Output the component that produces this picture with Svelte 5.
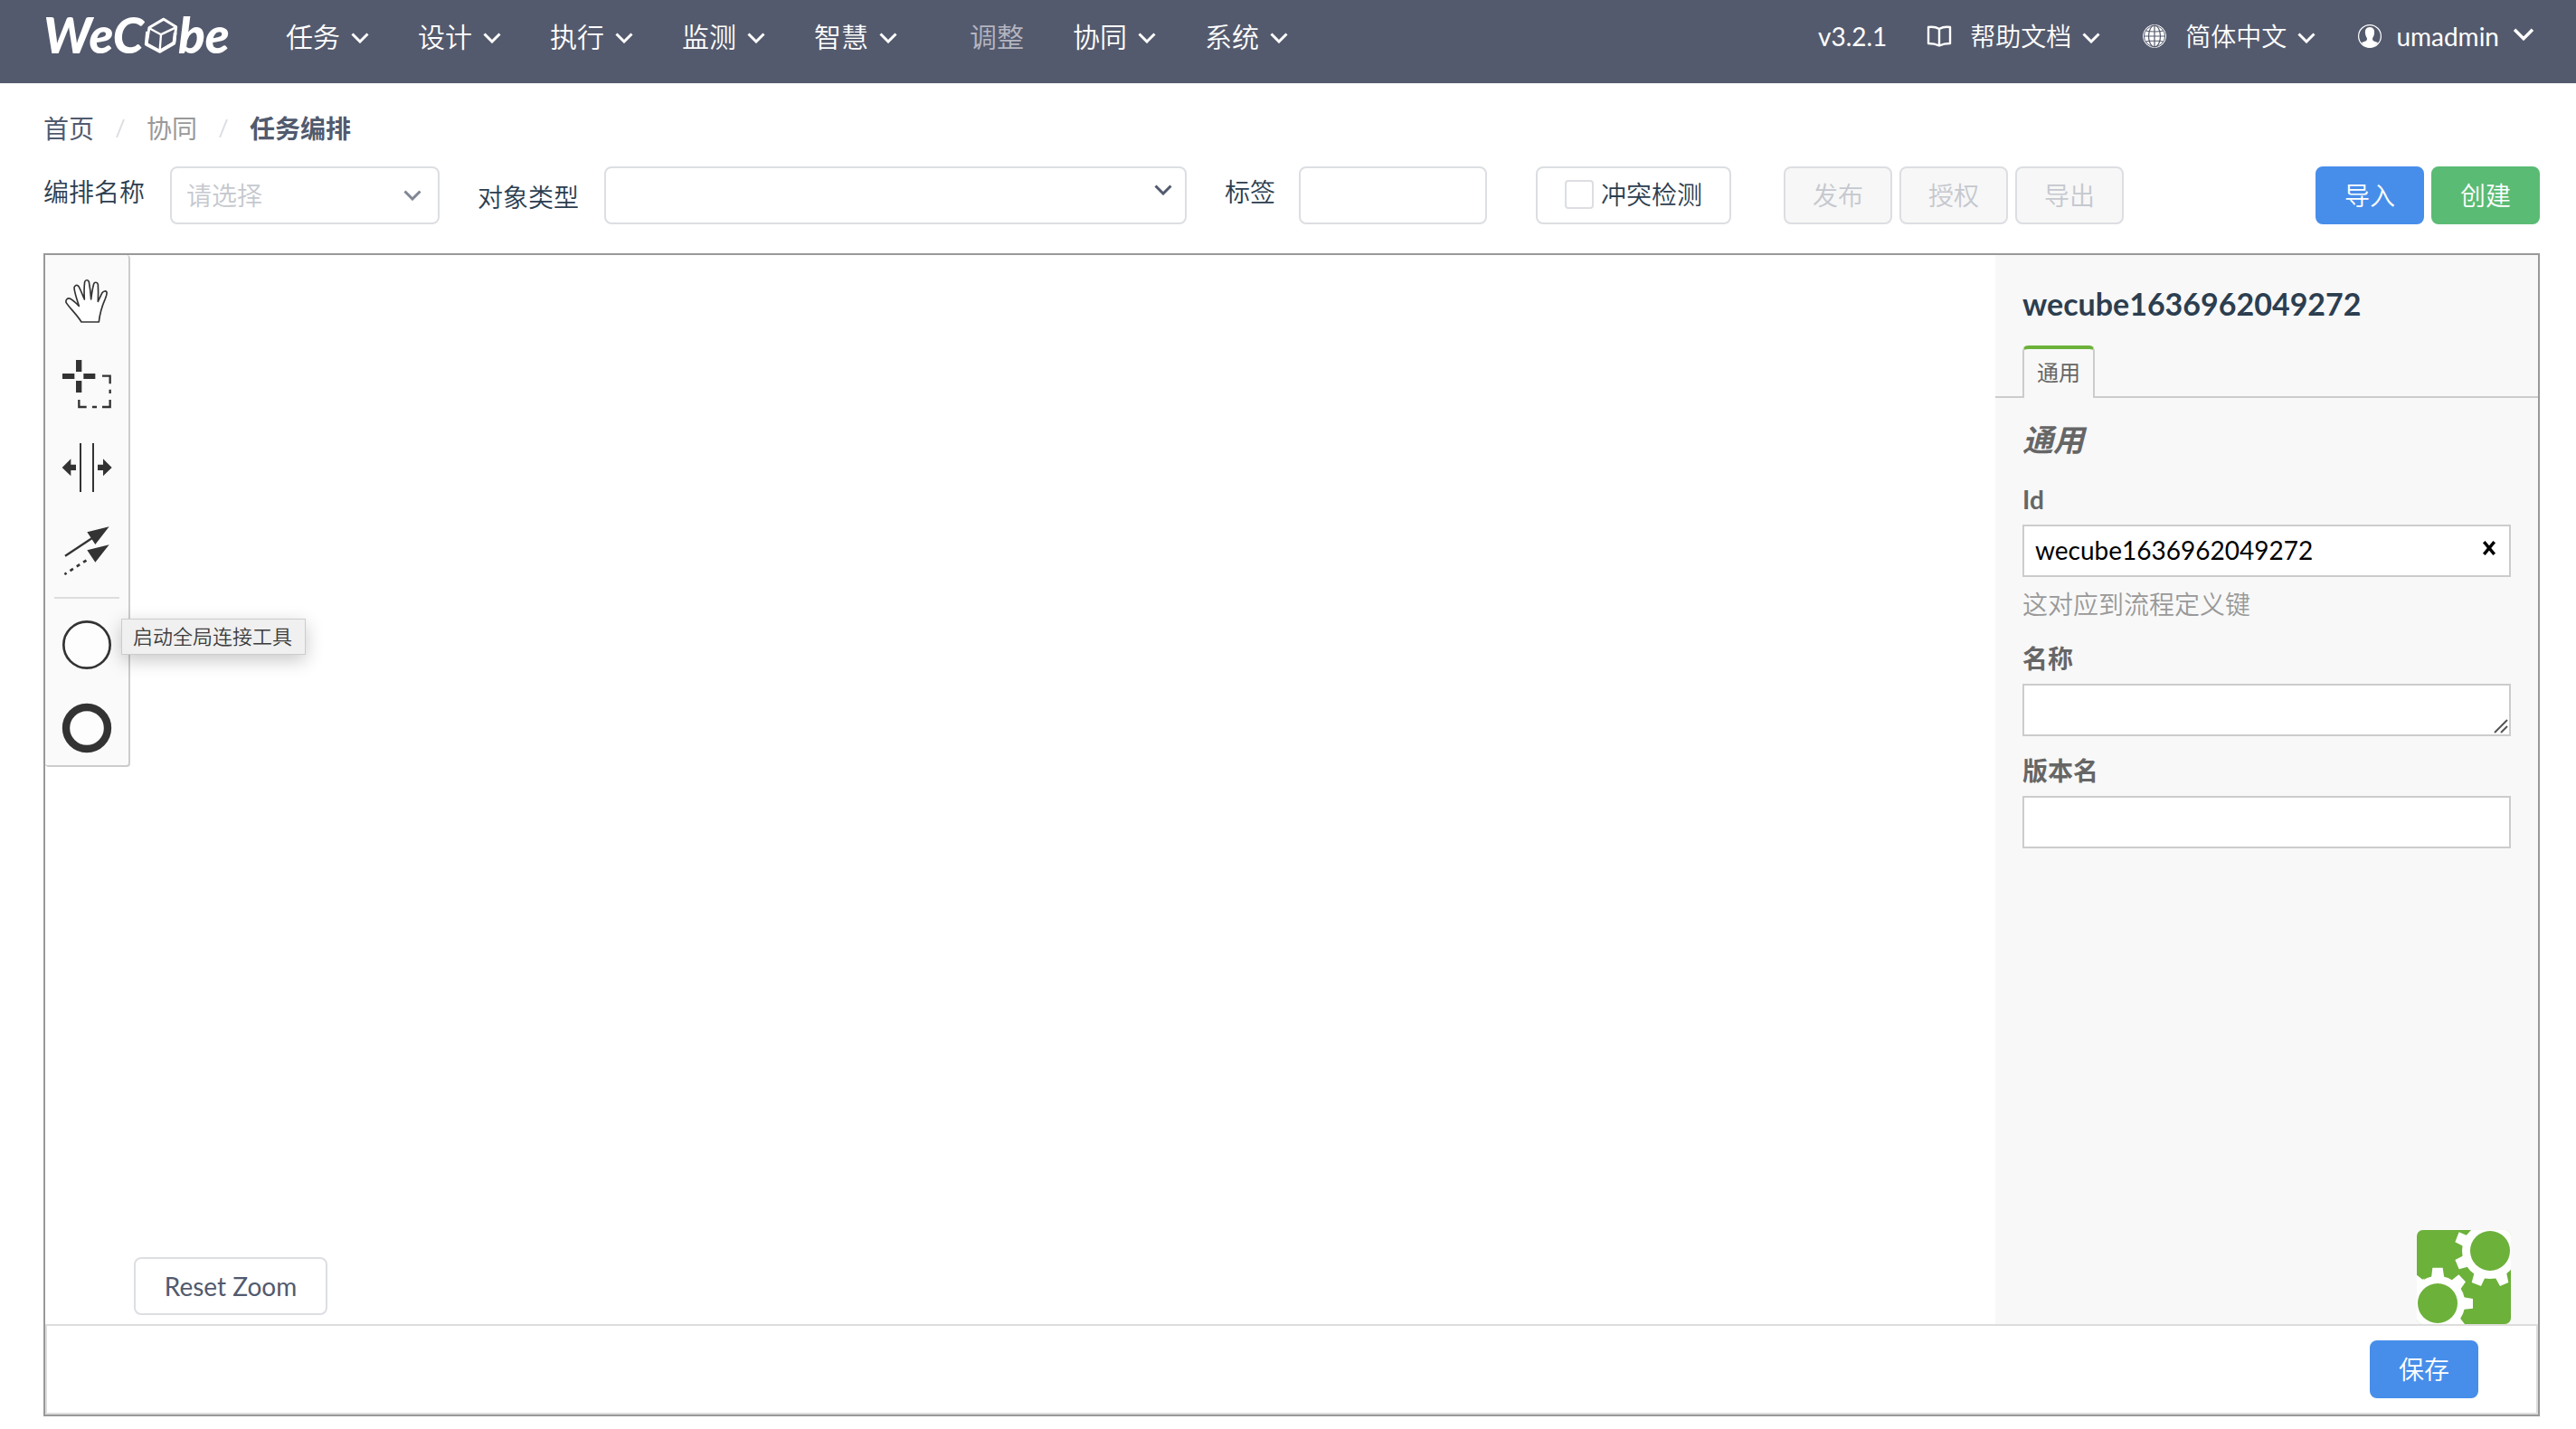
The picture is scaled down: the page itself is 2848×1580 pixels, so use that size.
<script>
  const menus = [
    { label: '任务' },
    { label: '设计' },
    { label: '执行' },
    { label: '监测' },
    { label: '智慧' },
    { label: '调整', disabled: true },
    { label: '协同' },
    { label: '系统' }
  ];
  const actions = ['发布', '授权', '导出'];
  let processId = $state('wecube1636962049272');
  let name = $state('');
  let version = $state('');
  let tag = $state('');
  let conflict = $state(false);
</script>

{#snippet chevron(size)}
  <svg class="chevron {size}" viewBox="0 0 20 12" aria-hidden="true"><path d="M1.500 1.500 10 10 18.500 1.500" /></svg>
{/snippet}

<div class="page">
  <header class="topbar">
    <a class="logo" href="#home" aria-label="WeCube">
      <span>WeC</span>
      <svg class="cube" viewBox="344 38 114 122" aria-hidden="true">
        <path d="M410 47 451 73 445 124 397 153 353 129 362 75Z" stroke-width="9" />
        <path d="M364 78 401 98 447 76M401 98 397 150" stroke-width="7" />
        <path d="M356 88 352 130 397 154 444 127 448 92" stroke-width="11" />
      </svg>
      <span>be</span>
    </a>
    <nav class="menu">
      {#each menus as item}
        <button class="menu-item" class:disabled={item.disabled} disabled={item.disabled}>
          {item.label}
          {#if !item.disabled}{@render chevron('small')}{/if}
        </button>
      {/each}
    </nav>
    <div class="tools">
      <span class="release">v3.2.1</span>
      <button class="tool docs">
        <svg class="tool-icon" viewBox="0 0 28 28" aria-hidden="true">
          <path d="M2 4Q9 3 14 6Q19 3 26 4V22Q19 22 14 24.500Q9 22 2 22ZM14 6V24" fill="none" stroke="currentColor" stroke-width="2.400" stroke-linejoin="round" />
        </svg>
        帮助文档 {@render chevron('small')}
      </button>
      <button class="tool lang">
        <svg class="tool-icon" viewBox="0 0 28 28" aria-hidden="true">
          <circle cx="14" cy="14" r="12.500" fill="#fff" stroke="#fff" />
          <g fill="none" stroke="#545a6d" stroke-width="1.200">
            <circle cx="14" cy="14" r="11.600" stroke-width="1" />
            <ellipse cx="14" cy="14" rx="6.500" ry="12" />
            <path d="M14 2V26M2 14H26M4 8Q14 10 24 8M4 20Q14 18 24 20" />
          </g>
        </svg>
        简体中文 {@render chevron('small')}
      </button>
      <button class="tool user">
        <svg class="tool-icon" viewBox="0 0 28 28" aria-hidden="true">
          <circle cx="14" cy="14" r="12.400" fill="none" stroke="#fff" stroke-width="1.200" />
          <path d="M14 4C18 4 19.500 7 19 11C18.700 14 17.500 15 17 16.500C17 19 18 19.500 23 21C20.500 25 17 26.500 14 26.500C11 26.500 7.500 25 5 21C10 19.500 11 19 11 16.500C10.500 15 9.300 14 9 11C8.500 7 10 4 14 4Z" fill="#fff" />
        </svg>
        umadmin {@render chevron('large')}
      </button>
    </div>
  </header>

  <nav class="crumbs" aria-label="breadcrumb">
    <a href="#home">首页</a>
    <svg class="slash" viewBox="0 0 10 20" aria-hidden="true"><path d="M9 0 1 20" /></svg>
    <span class="muted">协同</span>
    <svg class="slash" viewBox="0 0 10 20" aria-hidden="true"><path d="M9 0 1 20" /></svg>
    <strong>任务编排</strong>
  </nav>

  <div class="filters">
    <label class="upper" for="flow">编排名称</label>
    <div class="select flow">
      <select id="flow"><option>请选择</option></select>
      {@render chevron('field')}
    </div>
    <label class="lower" for="entity">对象类型</label>
    <div class="select entity">
      <select id="entity"><option></option></select>
      {@render chevron('field')}
    </div>
    <label class="upper" for="tag">标签</label>
    <input id="tag" class="tag" type="text" bind:value={tag} />
    <label class="check"><input type="checkbox" bind:checked={conflict} />冲突检测</label>
    <div class="group">
      {#each actions as action}<button class="btn" disabled>{action}</button>{/each}
    </div>
    <div class="group end">
      <button class="btn primary">导入</button>
      <button class="btn success">创建</button>
    </div>
  </div>

  <main class="designer">
    <div class="board">
      <section class="workspace">
        <div class="palette">
          <button class="entry" aria-label="抓手工具">
            <svg viewBox="75 65 246 246">
              <path d="M180 257H238C241 228 252 196 259 180C263 170 265 163 264 158C261 153 253 154 249 160L235 189C236 170 236 146 235 132C233 124 223 124 221 131C217 145 214 165 212 182C211 165 208 140 205 124C202 116 193 117 191 124C189 140 189 165 190 182C184 168 177 150 171 139C166 132 157 136 156 143C157 160 166 185 172 204C161 193 151 183 141 179C133 178 127 184 129 192C140 210 163 230 180 257Z" fill="#fff" stroke="#333" stroke-width="5" stroke-linejoin="round" />
            </svg>
          </button>
          <button class="entry" aria-label="套索工具">
            <svg viewBox="75 342 246 246">
              <path d="M162 384H181V423H162ZM162 453H181V492H162ZM117 429H157V447H117ZM187 429H226V447H187Z" fill="#333" />
              <path d="M249 437H275V463M275 482V495M275 516V540H249M231 540H216M197 540H172V516" fill="none" stroke="#333" stroke-width="7" />
            </svg>
          </button>
          <button class="entry" aria-label="空间工具">
            <svg viewBox="75 618 246 246">
              <path d="M177 660V822M219 660V822" stroke="#333" stroke-width="6" />
              <path d="M116 741 145 712V731H162V750H145V769ZM281 741 252 712V731H234V750H252V769Z" fill="#333" />
            </svg>
          </button>
          <button class="entry" aria-label="全局连接工具">
            <svg viewBox="75 24 246 246">
              <path d="M126 164 220 102" stroke="#333" stroke-width="7" />
              <path d="M124 225 205 173" stroke="#333" stroke-width="8" stroke-dasharray="12 14" stroke-dashoffset="4" />
              <path d="M199 85 272 67 226 126ZM199 145 272 127 226 185Z" fill="#333" />
            </svg>
          </button>
          <hr />
          <button class="entry" aria-label="开始事件">
            <svg viewBox="75 336 246 246"><circle cx="198" cy="459" r="77" fill="#fff" fill-opacity="0.500" stroke="#333" stroke-width="8" /></svg>
          </button>
          <button class="entry" aria-label="结束事件">
            <svg viewBox="75 612 246 246"><circle cx="198" cy="735" r="69" fill="#fff" fill-opacity="0.500" stroke="#333" stroke-width="25" /></svg>
          </button>
          <div class="tooltip" role="tooltip">启动全局连接工具</div>
        </div>
        <button class="btn reset">Reset Zoom</button>
      </section>

      <aside class="panel">
        <h2>{processId}</h2>
        <div class="tabs"><button class="tab">通用</button></div>
        <div class="props">
          <h3>通用</h3>
          <div class="field">
            <label for="pid">Id</label>
            <div class="control">
              <input id="pid" type="text" bind:value={processId} />
              <button class="clear" aria-label="清除"><svg viewBox="0 0 14 14"><path d="M2 1 12 13M12 1 2 13" /></svg></button>
            </div>
            <p>这对应到流程定义键</p>
          </div>
          <div class="field">
            <label for="pname">名称</label>
            <div class="control">
              <textarea id="pname" rows="1" bind:value={name}></textarea>
              <svg class="grip" viewBox="0 0 16 16" aria-hidden="true"><path d="M1 15 15 1M8 15 15 8" /></svg>
            </div>
          </div>
          <div class="field">
            <label for="pver">版本名</label>
            <input id="pver" type="text" bind:value={version} />
          </div>
        </div>
        <svg class="badge" viewBox="336 90 312 312" aria-hidden="true">
          <defs><clipPath id="badge-clip"><rect x="336" y="90" width="312" height="312" rx="20" /></clipPath></defs>
          <g clip-path="url(#badge-clip)">
            <rect x="336" y="90" width="312" height="312" fill="#6cb13a" />
            <g fill="#fff">
              <path d="M579 90H648V160H579Z" />
              <circle cx="579" cy="159" r="93" />
              <path d="M530 80 500 107 476 97 463 130 495 146ZM494 173 463 189 476 220 510 211ZM530 220 518 264 549 276 566 240ZM592 240 612 276 640 264 630 215Z" />
              <path d="M336 402H405V333H336Z" />
              <circle cx="405" cy="333" r="91" />
              <path d="M384 250 388 215H422L427 250ZM446 261 475 238 498 262 476 293ZM486 312 522 318V350L486 354ZM484 374 479 382 495 402H440ZM362 250 355 254 336 239V290Z" />
            </g>
            <circle cx="579" cy="159" r="66" fill="#6cb13a" />
            <circle cx="405" cy="333" r="66" fill="#6cb13a" />
          </g>
        </svg>
      </aside>
    </div>
    <footer class="savebar"><button class="btn primary">保存</button></footer>
  </main>
</div>

<style>
  :global(body) {
    background: #fff;
  }
  .page,
  .page :global(*) {
    box-sizing: border-box;
  }
  .page {
    display: flex;
    flex-direction: column;
    min-height: 100vh;
    padding-bottom: 14px;
    font-family: Lato, 'Noto Sans CJK SC', sans-serif;
    font-size: 28px;
    line-height: 40px;
    color: #2c3e50;
  }
  button,
  input,
  select,
  textarea {
    font: inherit;
    color: inherit;
  }
  button {
    padding: 0;
    border: 0;
    background: none;
    cursor: pointer;
  }

  .chevron {
    flex: none;
    fill: none;
    stroke: currentColor;
    stroke-width: 3;
  }
  .small {
    width: 20px;
    height: 12px;
    margin-top: 4px;
  }
  .large {
    width: 24px;
    height: 14px;
    margin-bottom: 4px;
  }

  .topbar {
    display: flex;
    align-items: center;
    height: 92px;
    padding: 0 46px 12px 48px;
    background: #545a6d;
    color: #fff;
  }
  .logo {
    display: flex;
    align-items: center;
    width: 204px;
    margin-right: 64px;
    padding-bottom: 4px;
    color: #fff;
    font-size: 55px;
    line-height: 60px;
    font-weight: 900;
    font-style: italic;
    text-decoration: none;
  }
  .cube {
    flex: none;
    width: 38px;
    height: 41px;
    fill: none;
    stroke: #fff;
    stroke-linejoin: round;
  }
  .menu {
    display: flex;
    gap: 54px;
    font-size: 30px;
    font-weight: 350;
  }
  .menu-item {
    display: flex;
    align-items: center;
    gap: 12px;
    white-space: nowrap;
  }
  .menu-item.disabled {
    margin-left: 26px;
    color: #b4b6c2;
  }
  .tools {
    display: flex;
    align-items: center;
    margin-left: auto;
  }
  .release {
    margin-right: 44px;
  }
  .tool {
    display: flex;
    align-items: center;
    gap: 12px;
    white-space: nowrap;
  }
  .tool-icon {
    width: 28px;
    height: 28px;
    flex: none;
    margin-right: 8px;
  }
  .docs,
  .lang {
    margin-right: 46px;
    font-weight: 350;
  }
  .user {
    gap: 15px;
  }
  .user .tool-icon {
    margin-right: 0;
  }

  .crumbs {
    display: flex;
    align-items: center;
    gap: 24px;
    padding: 30px 48px 22px;
    color: #515a6e;
  }
  .crumbs a {
    color: inherit;
    text-decoration: none;
  }
  .crumbs .muted {
    color: #999;
  }
  .slash {
    width: 10px;
    height: 20px;
    stroke: #dcdee2;
    stroke-width: 2;
  }

  .filters {
    display: flex;
    align-items: center;
    padding: 0 40px 32px 48px;
    font-weight: 350;
    white-space: nowrap;
  }
  .upper {
    padding-bottom: 8px;
  }
  .lower {
    padding-top: 4px;
  }
  .select {
    position: relative;
    height: 64px;
  }
  .select select {
    width: 100%;
    height: 64px;
    padding: 0 60px 0 16px;
    appearance: none;
    border: 2px solid #dcdee2;
    border-radius: 8px;
    background: #fff;
    color: #c5c8ce;
  }
  .select .chevron {
    position: absolute;
    right: 20px;
    top: 26px;
    width: 20px;
    height: 12px;
    stroke: #808695;
    pointer-events: none;
  }
  .entity .chevron {
    right: 16px;
    top: 20px;
    stroke: #515a6e;
  }
  .flow {
    width: 298px;
    margin: 0 42px 0 28px;
  }
  .entity {
    flex: 1;
    margin: 0 42px 0 28px;
  }
  .tag {
    width: 208px;
    height: 64px;
    margin: 0 54px 0 26px;
    padding: 0 14px;
    border: 2px solid #dcdee2;
    border-radius: 8px;
  }
  .check {
    display: flex;
    align-items: center;
    gap: 8px;
    width: 216px;
    height: 64px;
    margin-right: 58px;
    padding: 0 0 2px 30px;
    border: 2px solid #dcdee2;
    border-radius: 8px;
  }
  .check input {
    width: 32px;
    height: 32px;
    margin: 0;
    appearance: none;
    border: 2px solid #dcdee2;
    border-radius: 4px;
    background: #fff;
  }
  .group {
    display: flex;
    gap: 8px;
  }
  .end {
    margin-left: 212px;
  }
  .btn {
    width: 120px;
    height: 64px;
    border: 2px solid #dcdee2;
    border-radius: 8px;
    background: #fff;
    font-weight: 350;
  }
  .btn:disabled {
    background: #f7f7f7;
    color: #c5c8ce;
  }
  .btn.primary {
    border-color: #478eea;
    background: #478eea;
    color: #fff;
  }
  .btn.success {
    border-color: #5abb74;
    background: #5abb74;
    color: #fff;
  }

  .designer {
    display: flex;
    flex: 1;
    flex-direction: column;
    margin: 0 40px 0 48px;
    border: 2px solid #999;
  }
  .board {
    display: flex;
    flex: 1;
  }
  .workspace {
    display: flex;
    flex: 1;
    flex-direction: column;
    align-items: flex-start;
    justify-content: space-between;
    padding-bottom: 10px;
  }
  .palette {
    position: relative;
    display: flex;
    flex-direction: column;
    align-items: center;
    gap: 10px;
    width: 94px;
    padding-top: 10px;
    border: solid #ccc;
    border-width: 0 2px 2px 0;
    border-radius: 4px;
    background: #fafafa;
  }
  .entry,
  .entry svg {
    display: block;
    width: 82px;
    height: 82px;
  }
  hr {
    width: 72px;
    height: 2px;
    margin: 0;
    border: 0;
    background: #ddd;
  }
  .tooltip {
    position: absolute;
    left: 84px;
    top: 402px;
    padding: 0 14px 0 12px;
    border: 1px solid #ccc;
    background: #f0f0f0;
    box-shadow: 0 6px 20px rgba(0, 0, 0, 0.22);
    color: #3c3c3c;
    font-size: 22px;
    line-height: 38px;
    font-weight: 350;
    white-space: nowrap;
  }
  .reset {
    width: 214px;
    margin-left: 98px;
    color: #515a6e;
    font-weight: 400;
  }

  .panel {
    display: flex;
    flex-direction: column;
    width: 600px;
    background: #f8f8f8;
  }
  h2 {
    margin: 0;
    padding: 30px 30px 22px;
    font-size: 34px;
    line-height: 48px;
    font-weight: 700;
  }
  .tabs {
    display: flex;
    height: 58px;
    padding-left: 30px;
    border-bottom: 2px solid #ccc;
  }
  .tab {
    width: 80px;
    height: 58px;
    padding-bottom: 2px;
    border: 2px solid #ccc;
    border-top: 4px solid #6cb13a;
    border-bottom: 0;
    border-radius: 6px 6px 0 0;
    background: #f8f8f8;
    color: #666;
    font-size: 24px;
  }
  .props {
    padding: 22px 30px 0;
  }
  h3 {
    margin: 0 0 22px;
    color: #666;
    font-size: 34px;
    line-height: 48px;
    font-style: italic;
    font-weight: 700;
  }
  .field {
    display: flex;
    flex-direction: column;
    margin-bottom: 18px;
  }
  .field label {
    margin-bottom: 8px;
    color: #666;
    font-weight: 700;
  }
  .field input,
  .field textarea {
    display: block;
    width: 100%;
    height: 58px;
    padding: 6px 12px 8px;
    border: 2px solid #ccc;
    border-radius: 0;
    background: #fff;
    color: #000;
  }
  .field textarea {
    resize: none;
    overflow: hidden;
  }
  .control {
    position: relative;
  }
  .clear {
    position: absolute;
    right: 16px;
    top: 18px;
    width: 16px;
    height: 16px;
  }
  .clear svg {
    display: block;
    stroke: #000;
    stroke-width: 3;
  }
  .grip {
    position: absolute;
    right: 3px;
    bottom: 3px;
    width: 16px;
    height: 16px;
    stroke: #555;
    stroke-width: 2;
  }
  .field p {
    margin: 10px 0 2px;
    color: #999;
    font-weight: 350;
  }
  .badge {
    width: 104px;
    height: 104px;
    margin: auto 30px 0 auto;
  }
  .savebar {
    display: flex;
    align-items: center;
    justify-content: flex-end;
    height: 100px;
    padding-right: 64px;
    border: 2px solid #ddd;
  }
</style>
